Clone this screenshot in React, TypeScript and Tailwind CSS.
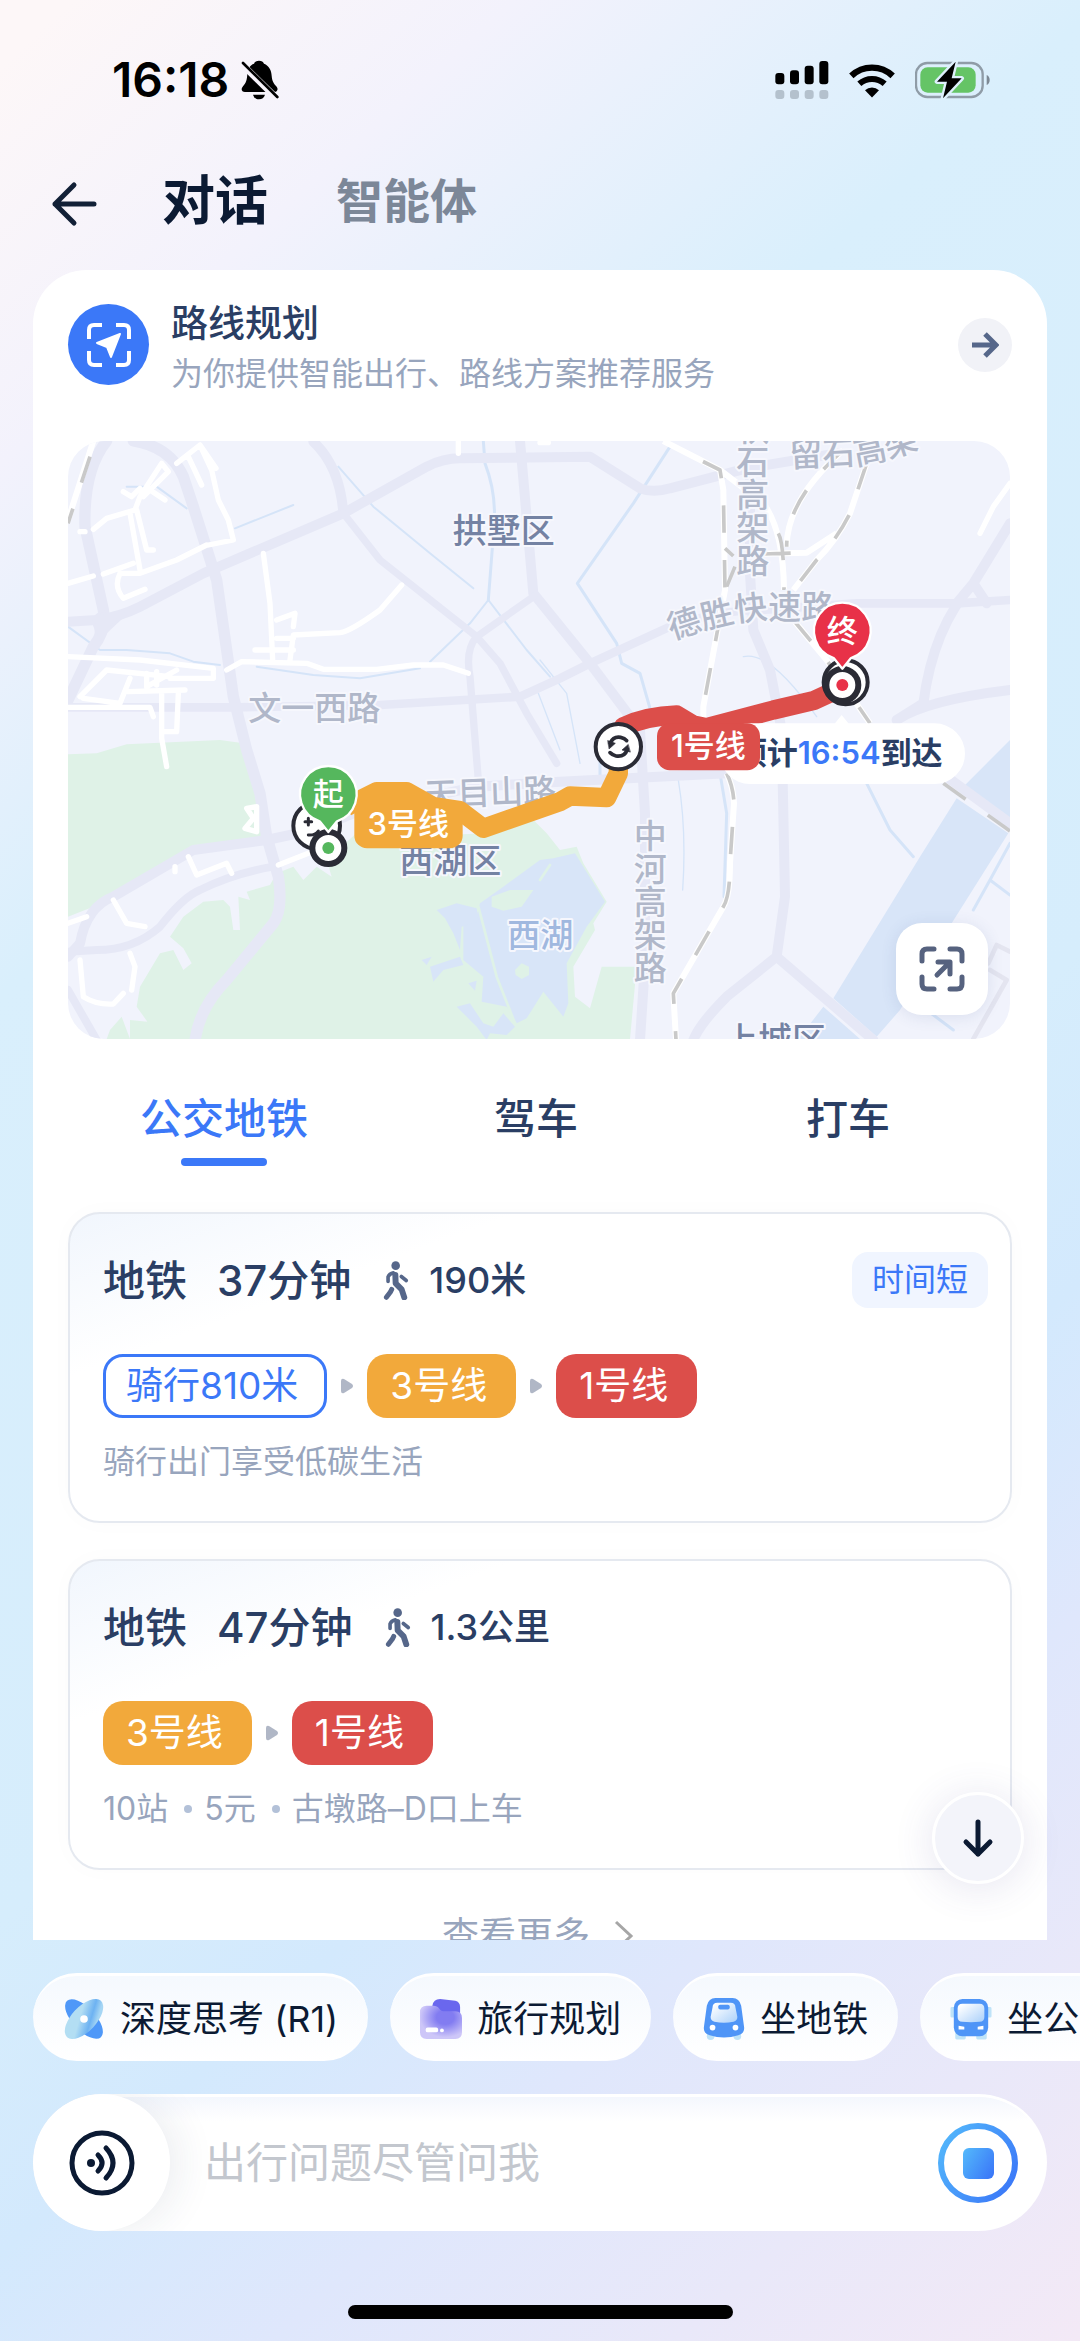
import React from "react";

const StatusBar = () => {
	return (
		<header className="flex h-40 shrink-0 items-center justify-between pr-[90px] pl-28 text-black">
			<div className="flex items-center gap-3">
				<span className="text-[48px] leading-none font-semibold">16:18</span>
				{/* silent mode */}
				<svg className="h-[40px] w-[38px]" viewBox="0 0 114 120">
					<path d="M54 2c8 0 13 3 15 9 15 6 22 19 23 36 1 16 6 23 15 33 5 6 3 16-6 16H12C2 96-1 88 5 80c10-11 13-20 14-38 1-16 8-27 20-31 2-6 8-9 15-9z" fill="#000" />
					<path d="M36 104h36c-3 9-9 14-18 14s-15-5-18-14z" fill="#000" />
					<path d="M2 12l104 102" stroke="#f7f3fa" strokeWidth="20" />
					<path d="M6 9l103 102" stroke="#000" strokeWidth="8" strokeLinecap="round" />
				</svg>
			</div>
			<div className="flex items-center gap-5">
				<svg className="h-[38px] w-[54px]" viewBox="0 0 160 114">
					<g fill="#000">
						<rect x="0" y="36" width="27" height="34" rx="9" />
						<rect x="44" y="28" width="27" height="42" rx="9" />
						<rect x="88" y="14" width="27" height="56" rx="9" />
						<rect x="132" y="0" width="27" height="70" rx="9" />
					</g>
					<g fill="#b4c1cd">
						<rect x="0" y="87" width="27" height="27" rx="9" />
						<rect x="44" y="87" width="27" height="27" rx="9" />
						<rect x="88" y="87" width="27" height="27" rx="9" />
						<rect x="132" y="87" width="27" height="27" rx="9" />
					</g>
				</svg>
				<svg className="h-[35px] w-[46px]" viewBox="0 0 138 104" fill="none">
					<path d="M7 38a90 90 0 0 1 124 0" stroke="#000" strokeWidth="19" />
					<path d="M31 62a57 57 0 0 1 76 0" stroke="#000" strokeWidth="18" />
					<path d="M48 81a32 32 0 0 1 42 0L69 103z" fill="#000" />
				</svg>
				<svg className="h-[38px] w-[75px]" viewBox="0 0 225 114">
					<rect x="3" y="6" width="200" height="102" rx="34" fill="none" stroke="#8f9ca7" strokeWidth="7" />
					<rect x="16" y="19" width="166" height="76" rx="22" fill="#65c466" />
					<path d="M215 42c12 4 12 26 0 30z" fill="#7d8994" />
					<path d="M122 2L66 62h30l-12 50 56-60h-30z" fill="#000" stroke="#def0fc" strokeWidth="14" paintOrder="stroke" strokeLinejoin="round" />
				</svg>
			</div>
		</header>
	);
};

const NavBar = () => {
	return (
		<nav className="flex h-[110px] shrink-0 items-start pl-[50px]">
			<button type="button" aria-label="返回" className="mt-5">
				<svg className="h-12 w-12" viewBox="0 0 48 48" fill="none" stroke="#122036" strokeWidth="5" strokeLinecap="round" strokeLinejoin="round">
					<path d="M44 24H5M24 5L5 24l19 19" />
				</svg>
			</button>
			<button type="button" className="ml-16 text-[53px] leading-[82px] font-bold text-[#0b1a33]">
				对话
			</button>
			<button type="button" className="ml-[68px] text-[47px] leading-[82px] font-bold text-[#7c8798]">
				智能体
			</button>
		</nav>
	);
};

const CityMap = () => {
	return (
		<div className="relative mt-14 mr-[2px] shrink-0 overflow-hidden rounded-[36px] bg-[#f1f3fc]">
			<svg className="block h-[598px] w-full" viewBox="24 33 2826 1794" preserveAspectRatio="xMidYMid slice" fill="none" strokeLinecap="round" strokeLinejoin="round">
				{/* parks */}
				<g fill="#dff2e7">
					<path d="M24 973L110 970 200 943 480 930 540 938 600 1090 612 1220 400 1250 100 1430 24 1460z" />
					<path d="M650 1330L700 1310 730 1350 770 1310 815 1340 800 1290 900 1200 1000 1220 1290 1210 1400 1150 1460 1210 1500 1260 1550 1250 1570 1300 1640 1415 1600 1480 1605 1500 1540 1610 1545 1700 1590 1735 1625 1610 1730 1610 1710 1827 140 1827 150 1800 185 1760 210 1827 210 1770 262 1775 230 1730 240 1670 270 1620 300 1570 340 1560 370 1620 395 1600 370 1555 330 1520 370 1460 430 1415 490 1410 510 1430 520 1500 540 1500 535 1400 570 1410 560 1385 630 1365z" />
				</g>
				{/* lakes and rivers */}
				<g fill="#d8e5f8">
					<path d="M1260 1420L1330 1370 1440 1290 1480 1285 1545 1270 1635 1415 1580 1490 1520 1600 1525 1720 1510 1760 1450 1685 1400 1765 1370 1780 1340 1730 1265 1715 1270 1640 1210 1590 1210 1485 1245 1475z" />
					<path d="M1130 1440l60-20 60 15 5 40-50 15-5 70-20-50-25-45zM1110 1610l90-30 10 25-60 15-30 35zM1085 1590l30-10-15 25zM1225 1660l25-8-5 30zM1190 1730l40-10 40 60 30 10 30-40 35 40-25 25-50-5-10 20-30-40z" />
					<path d="M2320 1705L2580 1280 2690 1105 2845 1210 2675 1480 2520 1740 2450 1820zM2850 930L2710 1070 2850 1170zM2290 1730L2400 1827 2215 1827z" />
				</g>
				<g fill="#dff2e7">
					<path d="M1295 1400L1350 1380 1420 1380 1385 1430 1330 1442 1295 1430z" />
					<path d="M1365 1620l20-20 22 10v25l-22 12-18-12z" />
				</g>
				<path d="M1255 1430L1310 1640 1365 1780M1440 1350l30-45" stroke="#dff2e7" strokeWidth="8" />
				<g stroke="#d5e4f8" strokeWidth="8">
					<path d="M1270 33L1275 100Q1310 190 1302 290L1285 510M1830 50L1720 220 1552 460 1670 640 1685 700 1740 730 1780 870" strokeWidth="9" />
					<path d="M1285 510L1400 660 1470 740M1285 510L1230 580 1110 695M835 110L940 230 1110 370 1240 475M200 170L290 170 380 235M525 295L700 225M24 590L120 660 200 660 330 670 400 695 480 705M590 710L760 735 900 745 1080 715" strokeWidth="6" />
					<path d="M1435 790L1500 960M1440 690L1520 790 1560 1000M1855 1050Q1880 1200 1868 1380M2050 680Q2130 660 2270 860" strokeWidth="4" />
					<path d="M1980 1030L2000 1150 1992 1400M1620 950V1040M2420 1060L2490 1200 2560 1280M2850 1240L2790 1350 2740 1440M2790 1350L2850 1395M2600 1740L2680 1800" strokeWidth="9" />
				</g>
				{/* main roads */}
				<g stroke="#e6e8f6" strokeWidth="30">
					<path d="M24 575L110 570Q180 560 240 530L430 430 850 250 1100 110Q1150 85 1200 85L1590 80 1740 175Q1780 190 1830 175L2060 115 2330 70" />
					<path d="M140 33Q70 120 75 290L130 540Q140 600 100 650L24 810M220 33Q330 50 370 140L400 230 470 450 520 800 560 960 600 1090 620 1220 655 1340Q670 1440 640 1480L500 1650Q420 1730 405 1830" strokeWidth="34" />
					<path d="M760 35Q840 110 850 250M1380 33L1420 490 1590 700 1740 900 1755 1150V1600L1740 1830" />
					<path d="M850 250L960 390 1250 620 1320 700 1400 850 1490 1000M1420 500L1250 620Q1215 660 1230 740L1255 1050" strokeWidth="22" />
					<path d="M24 832H520L960 825 1380 800 1500 745 1590 700 1830 590Q1980 540 2100 540L2390 520H2690L2850 510" strokeWidth="26" />
					<path d="M2850 280L2740 460Q2620 590 2590 820L2510 870Q2600 810 2850 780M2690 520L2740 460 2780 520M2070 100V430L2080 600 2130 720 2165 900 2175 1400 2150 1580 2000 1700Q1920 1780 1900 1830M2150 1580L2440 1830M2660 1040L2850 1180" />
					<path d="M24 1580L60 1540Q80 1430 160 1400L400 1260 620 1230 760 1200 880 1150 1250 1070 1500 1055 2000 1030" />
					<path d="M24 1565L110 1560Q220 1560 300 1490 370 1400 420 1380 520 1330 640 1310M24 1680L110 1830" strokeWidth="24" />
					<path d="M130 540Q135 580 200 550 120 620 100 650 120 590 90 572z" fill="#e6e8f6" strokeWidth="8" />
				</g>
				{/* side streets */}
				<g stroke="#fff" strokeWidth="16">
					<path d="M24 460L100 438M130 432L220 400M180 430L240 430 350 390 440 345M445 345L520 330 505 270 475 210 455 120 420 45 350 100M60 305L75 305M100 298L140 265 225 240 240 200 305 100 325 125 250 200M190 185L215 200 240 175M210 250L240 420M230 240L260 360H280M270 180L315 210M385 80L425 165M420 45L468 115M180 430Q160 470 190 505L255 478" />
					<path d="M24 680L240 690 460 715V745L330 745M60 800L140 720 330 740M70 805L180 820 210 745M24 832H270L280 860M205 785L375 780M305 790V925L320 1010M355 790L350 905H310M260 730V770L350 720M290 725V765" />
					<path d="M610 370L630 520 638 690M500 720L545 695 740 700 790 718H950L1060 705H1150L1225 730M1025 465L960 540Q870 605 840 608L700 615 690 690M585 660H700M650 570L705 550 700 590M650 625H700" />
					<path d="M590 1130L560 1135 580 1165 555 1195 590 1205V1130M385 1280L410 1335 500 1300 515 1330M345 1310V1325M655 1305L745 1270M160 1410L200 1480 255 1490M24 1480L80 1460M60 1590L70 1700Q110 1725 160 1722L190 1690M210 1570L225 1610 215 1680" />
					<path d="M1195 33V70M1440 38H1465M2760 310L2800 230 2850 160" />
				</g>
				<path d="M2785 1600L2810 1545 2850 1565M2790 1620L2840 1650 2740 1827" stroke="#e4e5f0" strokeWidth="14" />
				{/* railways */}
				<g stroke="#fff" strokeWidth="18" strokeLinecap="butt">
					<path d="M100 33L24 270M1810 33L1980 120 1990 180 1995 480 1930 830V870M2000 1030Q2020 1070 2022 1120L2010 1300Q2010 1400 1990 1430L1840 1690 1848 1830M1980 120L2110 220Q2170 300 2172 480M2350 60Q2180 210 2180 350M2420 100L2370 250Q2330 330 2270 390L2200 480M2060 372L2240 368 2330 310M2200 570L2300 690 2430 880" />
				</g>
				<g stroke="#c9c9c9" strokeWidth="11" strokeLinecap="butt" strokeDasharray="82 82">
					<path d="M90 80L24 280" />
					<path d="M1920 90L1980 120 1990 180 1995 480 1930 830" strokeDashoffset="-10" />
					<path d="M2000 1030Q2020 1070 2022 1120L2010 1300Q2010 1400 1990 1430L1840 1690 1848 1830" />
					<path d="M2155 310Q2172 340 2172 480M2350 60Q2180 210 2180 350M2420 100L2370 250Q2330 330 2270 390L2200 480M2110 372L2240 368M2200 570L2300 690 2430 880M1995 355L2020 378M2000 470L2025 410M2650 1060L2850 1203" />
				</g>
				{/* labels */}
				<g fill="#b0b7c9" stroke="#f6f7fd" strokeWidth="12" paintOrder="stroke" fontSize="99" fontWeight="500">
					<text x="565" y="870">文一西路</text>
					<text x="1094" y="1130" transform="rotate(-2 1094 1130)">天目山路</text>
					<text x="2072" y="-55" className="[writing-mode:vertical-rl]">秋石高架路</text>
					<text x="1765" y="1168" className="[writing-mode:vertical-rl]">中河高架路</text>
					<path id="desheng" d="M1836 630Q2000 570 2130 566L2350 566" stroke="none" fill="none" />
					<text><textPath href="#desheng">德胜快速路</textPath></text>
					<path id="liushi" d="M2190 112L2400 102Q2480 95 2640 30" stroke="none" fill="none" />
					<text><textPath href="#liushi">留石高架</textPath></text>
					<g fill="#7482a3" fontSize="102">
						<text x="1178" y="338">拱墅区</text>
						<text x="1018" y="1328">西湖区</text>
						<text x="1992" y="1867">上城区</text>
					</g>
					<text x="1342" y="1550" fill="#a0b8df">西湖</text>
				</g>
				{/* route */}
				<path d="M860 1130L950 1085H1040L1120 1130 1200 1142 1270 1195 1500 1115 1530 1098 1640 1103 1675 1030V980" stroke="#f2a93b" strokeWidth="58" strokeLinecap="butt" />
				<path d="M1690 890Q1760 858 1850 855L1900 885 1940 893 2140 840 2260 812 2330 780" stroke="#dc4e4a" strokeWidth="58" />
				<g fill="#fff" stroke="#2a2b35">
					<circle cx="1675" cy="950" r="68" strokeWidth="12" />
					<path d="M1650 940Q1660 918 1682 922 1694 924 1700 932M1702 958Q1694 982 1668 978 1658 976 1650 968" strokeWidth="11" fill="none" />
					<path d="M1644 932l22 8-18 16zM1710 966l-24-6 18-16z" fill="#2a2b35" strokeWidth="2" />
					<circle cx="770" cy="1187" r="70" strokeWidth="12" />
					<path d="M735 1175h20M745 1165v20M745 1215q20 2 30-12" strokeWidth="9" />
					<circle cx="2357" cy="757" r="66" strokeWidth="12" />
					<circle cx="2347" cy="765" r="48" strokeWidth="18" />
					<circle cx="805" cy="1254" r="48" strokeWidth="18" />
				</g>
				<circle cx="2347" cy="765" r="18" fill="#e83148" />
				<circle cx="805" cy="1254" r="18" fill="#55b75d" />
				<g stroke="#fff" strokeWidth="7">
					<path d="M2347 716L2321 684A85 85 0 1 1 2373 684z" fill="#e83148" />
					<path d="M805 1206L779 1174A85 85 0 1 1 831 1174z" fill="#55b75d" />
				</g>
				<g fill="#fff">
					<path d="M2070 880H2325L2345 855 2365 880H2624A91 91 0 0 1 2624 1062H2070A91 91 0 0 1 2070 880z" />
					<text x="2027" y="1003" fontSize="93" fontWeight="600" fill="#2a3e64">
						预计<tspan fill="#3b78f8">16:54</tspan>到达
					</text>
					<rect x="1791" y="880" width="309" height="141" rx="38" fill="#dc4e4a" />
					<rect x="883" y="1110" width="325" height="145" rx="38" fill="#f2a93b" />
					<g fontSize="93" fontWeight="500" textAnchor="middle">
						<text x="1945" y="982">1号线</text>
						<text x="1045" y="1215">3号线</text>
						<text x="2347" y="636">终</text>
						<text x="805" y="1126">起</text>
					</g>
				</g>
			</svg>
			<button type="button" aria-label="展开地图" className="absolute right-[22px] bottom-6 flex size-[92px] items-center justify-center rounded-[26px] bg-white shadow-[0_2px_16px_rgba(60,80,140,0.12)]">
				<svg className="size-[46px]" viewBox="0 0 46 46" fill="none" stroke="#56627f" strokeWidth="5" strokeLinecap="round" strokeLinejoin="round">
					<path d="M15 3H8Q3 3 3 8v7M31 3h7q5 0 5 5v7M43 31v7q0 5-5 5h-7M15 43H8q-5 0-5-5v-7" />
					<path d="M18 29L30 17M19 16h12v12" />
				</svg>
			</button>
		</div>
	);
};

const Walker = () => {
	return (
		<svg className="h-[39px] w-[26px]" viewBox="0 0 76 118" fill="none" stroke="#56678a" strokeLinecap="round" strokeLinejoin="round">
			<circle cx="37" cy="14" r="13" fill="#56678a" stroke="none" />
			<path d="M14 62V48Q18 38 30 36M54 47l15 12" strokeWidth="11" />
			<path d="M36 42l1 26 18 18 8 24" strokeWidth="18" />
			<path d="M25 86l-4 8L9 110" strokeWidth="15" />
		</svg>
	);
};

const Next = () => {
	return (
		<svg className="h-4 w-3" viewBox="0 0 12 16" fill="#b0b7c6">
			<path d="M0 3q0-3 3-2l8 5q2 2 0 4l-8 5q-3 1-3-2z" />
		</svg>
	);
};

const lineStyle = "flex h-16 items-center rounded-[20px] pr-[29px] pl-[23px] text-[37px] text-white";

type RouteProps = {
	time: string;
	walk: string;
	tag?: string;
	bike?: string;
	children: React.ReactNode;
};

const RouteCard = ({ time, walk, tag, bike, children }: RouteProps) => {
	return (
		<article className="rounded-[32px] border-2 border-[#e5e9f0] bg-white bg-linear-160 from-[#f1f6fd] to-white to-25% pt-[38px] pr-[22px] pb-[35px] pl-[33px] shadow-[0_0_24px_rgba(0,0,0,0.02)]">
			<div className="flex h-14 items-center text-[#2a3e64]">
				<h2 className="flex gap-[30px] text-[42px] font-medium">
					<span>地铁</span>
					<span>{time}</span>
				</h2>
				<span className="ml-8 flex items-center gap-5 text-[36px] font-medium">
					<Walker />
					{walk}
				</span>
				{tag && <span className="ml-auto rounded-2xl bg-[#f0f5ff] px-5 text-[32px] leading-14 text-[#3b78f8]">{tag}</span>}
			</div>
			<div className="mt-[46px] flex items-center gap-[14px]">
				{bike && (
					<>
						<span className="flex h-16 items-center rounded-[20px] border-3 border-[#3b78f8] pr-[26px] pl-5 text-[37px] text-[#3b78f8]">{bike}</span>
						<Next />
					</>
				)}
				<span className={`${lineStyle} bg-[#f2a93b]`}>3号线</span>
				<Next />
				<span className={`${lineStyle} bg-[#dc4e4a]`}>1号线</span>
			</div>
			<p className="mt-5 flex h-12 items-center text-[32px] text-[#98a5bd]">{children}</p>
		</article>
	);
};

const Dot = () => <i className="mr-3 ml-4 size-2 rounded-full bg-[#b3c1d8]" />;

const RoutePanel = () => {
	return (
		<section className="flex min-h-0 flex-1 flex-col overflow-hidden rounded-t-[54px] bg-white px-[35px] pt-[34px]">
			<div className="flex h-[81px] shrink-0 items-center">
				<span className="flex size-[81px] items-center justify-center rounded-full bg-[#3b78f8]">
					<svg className="size-11" viewBox="0 0 44 44" fill="none" stroke="#fff" strokeWidth="4">
						<path d="M15 2H7Q2 2 2 7v9M29 2h8q5 0 5 5v9M42 28v9q0 5-5 5h-8M15 42H7q-5 0-5-5v-9" />
						<path d="M33 11L10 20l10 4 4 10z" fill="#fff" strokeWidth="2" strokeLinejoin="round" />
					</svg>
				</span>
				<div className="ml-[22px] flex-1 pt-2">
					<h1 className="text-[37px] leading-[50px] font-medium text-[#2a3e64]">路线规划</h1>
					<p className="text-[32px] leading-[50px] text-[#98a5bd]">为你提供智能出行、路线方案推荐服务</p>
				</div>
				<button type="button" aria-label="打开路线规划" className="flex size-[54px] items-center justify-center rounded-full bg-[#f1f2f7]">
					<svg className="size-7" viewBox="0 0 28 28" fill="none" stroke="#56678a" strokeWidth="5">
						<path d="M1 14h23M14 3l11 11-11 11" />
					</svg>
				</button>
			</div>
			<CityMap />
			<div className="grid shrink-0 grid-cols-3 pt-12 pr-2 pb-[46px] text-[42px] leading-[64px] font-medium text-[#2a3e64]">
				<button type="button" className="flex flex-col items-center text-[#3b78f8]">
					公交地铁
					<i className="mt-[7px] h-2 w-[86px] rounded-full bg-[#3b78f8]" />
				</button>
				<button type="button" className="self-start">驾车</button>
				<button type="button" className="self-start">打车</button>
			</div>
			<div className="flex shrink-0 flex-col gap-9">
				<RouteCard time="37分钟" walk="190米" tag="时间短" bike="骑行810米">
					骑行出门享受低碳生活
				</RouteCard>
				<RouteCard time="47分钟" walk="1.3公里">
					10站<Dot />5元<Dot />古墩路–D口上车
				</RouteCard>
			</div>
			<button type="button" className="mt-9 flex shrink-0 items-center justify-center gap-6 pr-1 text-[37px] leading-[60px] text-[#98a5bd]">
				查看更多
				<svg className="h-8 w-5" viewBox="0 0 20 32" fill="none" stroke="#a6a6a6" strokeWidth="3">
					<path d="M2 2l15 14L2 30" />
				</svg>
			</button>
		</section>
	);
};

const chipStyle =
	"flex h-[88px] shrink-0 items-center gap-[15px] rounded-full border-t-3 border-white bg-linear-to-b from-[#f5f9fe] to-white px-[30px] text-[36px] text-[#0b1a33]";

const Chips = () => {
	return (
		<div className="flex gap-[22px] overflow-hidden pl-[33px]">
			<button type="button" className={chipStyle}>
				<svg className="size-[42px]" viewBox="0 0 44 44">
					<defs>
						<linearGradient id="orbit" x1="0" y1="0" x2="1" y2="1">
							<stop offset="0.4" stopColor="#b3def3" />
							<stop offset="0.65" stopColor="#6db2f2" />
							<stop offset="0.8" stopColor="#a6d6f4" />
						</linearGradient>
					</defs>
					<ellipse cx="22" cy="22" rx="26" ry="12" fill="#4f98f8" transform="rotate(47 22 22)" />
					<ellipse cx="22" cy="22" rx="26" ry="13" fill="url(#orbit)" transform="rotate(-47 22 22)" />
					<circle cx="22" cy="22" r="4" fill="#fff" />
				</svg>
				深度思考 (R1)
			</button>
			<button type="button" className={chipStyle}>
				<svg className="size-[42px]" viewBox="0 0 44 44">
					<defs>
						<radialGradient id="folder" cx="0.6" cy="0.35" r="0.6">
							<stop offset="0.35" stopColor="#827cf1" />
							<stop offset="1" stopColor="#cdc6f8" />
						</radialGradient>
					</defs>
					<path d="M13 8q1-7 8-7l16 2q5 1 5 7v14H13z" fill="#6a67ee" />
					<path d="M0 15q0-7 7-7h7q4 0 6 3t6 3h11q7 0 7 7v15q0 7-7 7H7q-7 0-7-7z" fill="url(#folder)" />
					<rect x="6" y="31" width="13" height="5" rx="2" fill="#fff" />
					<circle cx="23" cy="34" r="2" fill="#fff" />
				</svg>
				旅行规划
			</button>
			<button type="button" className={chipStyle}>
				<svg className="size-[42px]" viewBox="0 0 44 44">
					<defs>
						<linearGradient id="glass" x1="0" y1="0" x2="1" y2="1">
							<stop offset="0.1" stopColor="#fff" />
							<stop offset="1" stopColor="#a9d0fa" />
						</linearGradient>
					</defs>
					<circle cx="8" cy="40" r="4" fill="#bfe3f8" />
					<circle cx="36" cy="40" r="4" fill="#bfe3f8" />
					<path d="M13 0h18q7 0 9 8l3 22q1 7-6 9-15 5-30 0-7-2-6-9L4 8q2-8 9-8z" fill="#4f95f7" />
					<path d="M15 5h14q5 0 5 5l2 10q0 4-4 5-10 2-20 0-4-1-4-5l2-10q0-5 5-5z" fill="url(#glass)" />
					<rect x="16" y="7" width="12" height="5" rx="2" fill="#4f95f7" />
					<circle cx="10" cy="31" r="3" fill="#fff" />
					<circle cx="34" cy="31" r="3" fill="#fff" />
				</svg>
				坐地铁
			</button>
			<button type="button" className={chipStyle}>
				<svg className="size-[42px]" viewBox="0 0 44 44">
					<path d="M2 11h40v8H2zM7 36h8v6H7zM29 36h8v6h-8z" fill="#bfe3f8" stroke="#bfe3f8" strokeWidth="3" strokeLinejoin="round" />
					<rect x="4" y="1" width="36" height="39" rx="9" fill="#4f95f7" />
					<path d="M13 6h18q5 0 5 5v9q0 5-5 5-9 1-18 0-5 0-5-5v-9q0-5 5-5z" fill="url(#glass)" />
					<path d="M9 29l6 1v3H9zM35 29l-6 1v3h6z" fill="#fff" />
				</svg>
				坐公交
			</button>
		</div>
	);
};

const Composer = () => {
	return (
		<form className="mx-[33px] mt-[33px] flex h-[137px] items-center overflow-hidden rounded-full bg-white bg-linear-to-b from-[#f3f6fd] to-white to-20% pr-[29px] shadow-[inset_0_3px_0_#fff]">
			<button type="button" aria-label="语音输入" className="flex size-[137px] shrink-0 items-center justify-center rounded-full bg-white shadow-[8px_0_40px_rgba(30,50,90,0.09)]">
				<svg className="size-[66px]" viewBox="0 0 66 66" fill="none" stroke="#0b1a33" strokeWidth="5" strokeLinecap="round">
					<circle cx="33" cy="33" r="30" />
					<circle cx="22" cy="33" r="4" fill="#0b1a33" stroke="none" />
					<path d="M29 25q8 8 0 16M37 18q14 15 0 30" />
				</svg>
			</button>
			<input type="text" aria-label="出行问题" placeholder="出行问题尽管问我" className="ml-[34px] min-w-0 flex-1 bg-transparent text-[42px] outline-none placeholder:text-[#c3c7ce]" />
			<button type="button" aria-label="停止">
				<svg className="size-20" viewBox="0 0 80 80">
					<defs>
						<linearGradient id="stop" x1="0" y1="0.2" x2="1" y2="0.8">
							<stop offset="0" stopColor="#52b5fb" />
							<stop offset="1" stopColor="#3b78f8" />
						</linearGradient>
					</defs>
					<circle cx="40" cy="40" r="37" fill="none" stroke="url(#stop)" strokeWidth="6" />
					<rect x="25" y="25" width="31" height="31" rx="6" fill="url(#stop)" />
				</svg>
			</button>
		</form>
	);
};

export default function App() {
	return (
		<main className="flex h-screen flex-col overflow-hidden bg-[linear-gradient(138deg,#fdf7f8_2%,#f3f2fc_14%,#d9effc_30%,#d6edfc_58%,#d3e9fd_68%,#dfe7fc_78%,#f3e9f6_100%)] font-['Inter','Noto_Sans_CJK_SC',sans-serif]">
			<StatusBar />
			<NavBar />
			<div className="relative flex min-h-0 flex-1 flex-col px-[33px]">
				<RoutePanel />
				{/* scroll to latest */}
				<button type="button" aria-label="滚动到底部" className="absolute right-14 bottom-14 flex size-[92px] items-center justify-center rounded-full border-3 border-white bg-[#f3f4fa] shadow-[0_4px_40px_rgba(80,70,150,0.14)]">
					<svg className="h-10 w-8" viewBox="0 0 32 40" fill="none" stroke="#0b1a33" strokeWidth="5" strokeLinecap="round" strokeLinejoin="round">
						<path d="M16 4v32M4 24l12 12 12-12" />
					</svg>
				</button>
			</div>
			<footer className="shrink-0 pt-[33px] pb-[22px]">
				<Chips />
				<Composer />
				<div className="mx-auto mt-[74px] h-[14px] w-[385px] rounded-full bg-black" />
			</footer>
		</main>
	);
}
